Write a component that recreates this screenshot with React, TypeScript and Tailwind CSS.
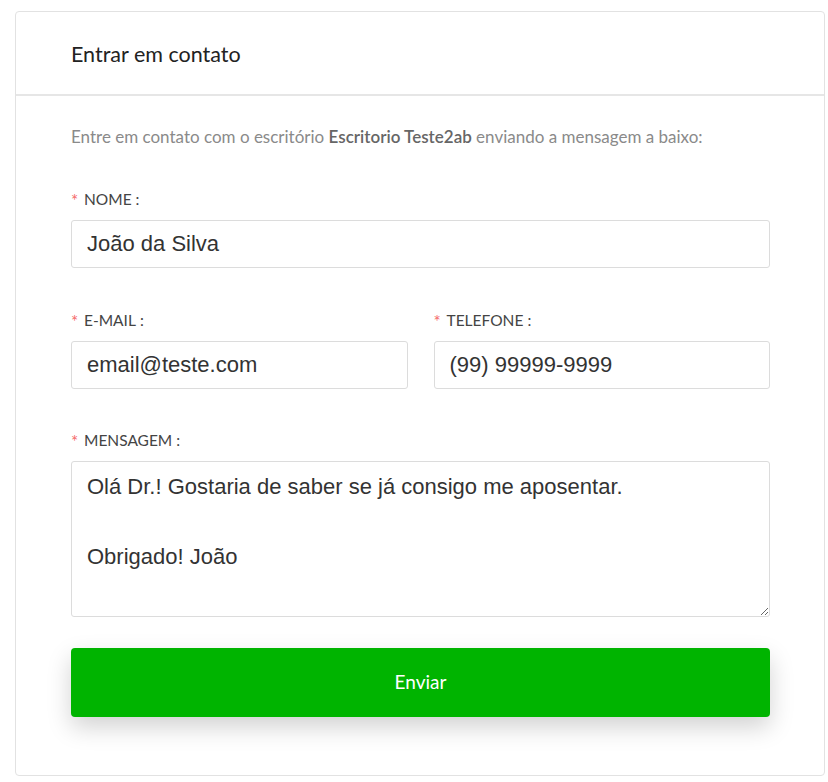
const labelCls = "flex items-center text-[15.5px] text-[#444] mb-[10px] h-[20px]";
const inputCls =
  "w-full h-[48px] border border-[#dcdcdc] rounded-[3px] px-[15px] text-[22px] text-[#333] font-['Liberation_Sans',Arial,sans-serif] outline-none bg-white";

function Label({ text }: { text: string }) {
  return (
    <div className={labelCls}>
      <span className="text-[#f56c6c] text-[17px] w-[13px] shrink-0 mt-[2px]">*</span>
      <span>{text}</span>
      <span className="ml-[4px]">:</span>
    </div>
  );
}

export default function App() {
  return (
    <div className="min-h-[782px] bg-white pt-[11px] pl-[15px] pr-[3px] font-['Lato','Noto_Sans',sans-serif]">
      <div className="w-[810px] h-[765px] border border-[#e2e2e2] rounded-[4px] bg-white">
        {/* Header */}
        <div className="h-[84px] border-b-2 border-[#e6e6e6] flex items-center pl-[55px] pr-[54px]">
          <h2 className="text-[21.5px] text-[#222] pt-[2px]">Entrar em contato</h2>
        </div>

        {/* Body */}
        <div className="pl-[55px] pr-[54px] pt-[28px]">
          <p className="text-[17px] text-[#8a8a8a] mb-[40px]">
            Entre em contato com o escritório <span className="font-semibold text-[#666]">Escritorio Teste2ab</span> enviando a mensagem a baixo:
          </p>

          <Label text="NOME" />
          <input className={inputCls} defaultValue="João da Silva" />

          <div className="grid grid-cols-2 gap-[26px] mt-[43px]">
            <div>
              <Label text="E-MAIL" />
              <input className={inputCls} defaultValue="email@teste.com" />
            </div>
            <div>
              <Label text="TELEFONE" />
              <input className={inputCls} defaultValue="(99) 99999-9999" />
            </div>
          </div>

          <div className="mt-[42px]">
            <Label text="MENSAGEM" />
            <textarea
              className="w-full h-[156px] border border-[#dcdcdc] rounded-[3px] px-[15px] py-[7px] text-[22px] leading-[35px] text-[#333] font-['Liberation_Sans',Arial,sans-serif] outline-none block"
              defaultValue={"Olá Dr.! Gostaria de saber se já consigo me aposentar.\n\nObrigado! João"}
            />
          </div>

          <button className="mt-[31px] w-full h-[69px] rounded-[4px] bg-[#00b400] text-white text-[19px] shadow-[0_10px_25px_rgba(0,0,0,0.18)]">
            Enviar
          </button>
        </div>
      </div>
    </div>
  );
}
